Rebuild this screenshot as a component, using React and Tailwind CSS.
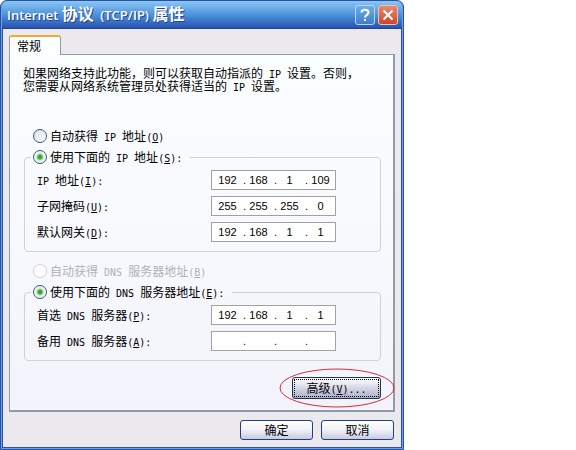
import React, { useState } from "react";

// Chinese glyphs are 12px wide, latin ones half of that
const Mixed = ({ children }) =>
    children.split(/([\x20-\x7e]+)/).map((part, i) =>
        /^[\x20-\x7e]+$/.test(part) ? (
            <span key={i} className="font-['DejaVu_Sans_Mono',monospace] text-[10px] leading-0 whitespace-pre">{part}</span>
        ) : (
            part
        )
    );

const Caption = ({ text, hotkey, end = "" }) => (
    <span className="whitespace-nowrap">
        <Mixed>{text + "("}</Mixed>
        <span className="font-['DejaVu_Sans_Mono',monospace] text-[10px] leading-0 underline underline-offset-1">{hotkey}</span>
        <Mixed>{")" + end}</Mixed>
    </span>
);

const Radio = ({ name, value, selected, onSelect, disabled, ...caption }) => (
    <label className={`flex w-fit items-center gap-[3px] leading-[14px] ${disabled ? "text-[#b0b1b8]" : ""}`}>
        <input
            type="radio"
            name={name}
            checked={selected === value}
            onChange={() => onSelect(value)}
            disabled={disabled}
            className={`h-3.5 w-3.5 shrink-0 appearance-none rounded-full border border-[#35587f] disabled:border-[#cfd0d6] disabled:from-white ${
                selected === value
                    ? "bg-[radial-gradient(circle,#23951f_0,#4bb445_2px,#eef5ee_4px)]"
                    : "bg-linear-to-br from-[#dcdfe2] to-white"
            }`}
        />
        <Caption {...caption} />
    </label>
);

const IpField = ({ id, octets }) => {
    const [parts, setParts] = useState(octets);

    const change = (index, text) => {
        setParts(parts.map((p, i) => (i === index ? text : p)));
    };

    return (
        <div className="flex h-5 w-[125px] items-center border border-[#a0a1a8] bg-white pl-[3px] font-['Liberation_Sans',sans-serif] text-[11px]">
            {parts.map((part, i) => (
                <React.Fragment key={i}>
                    {i > 0 && <span className="w-1.5 text-right">.</span>}
                    <input
                        id={i === 0 ? id : undefined}
                        aria-label={i === 0 ? undefined : `${id} ${i + 1}`}
                        value={part}
                        maxLength={3}
                        onChange={(e) => change(i, e.target.value)}
                        className="w-[25px] text-center outline-none"
                    />
                </React.Fragment>
            ))}
        </div>
    );
};

const FieldRow = ({ id, octets, ...caption }) => (
    <div className="flex items-center">
        <label htmlFor={id} className="w-[174px] shrink-0">
            <Caption {...caption} end=":" />
        </label>
        <IpField id={id} octets={octets} />
    </div>
);

const Group = ({ legend, children }) => (
    <fieldset className="rounded-[4px] border border-[#d0d1d8] px-3 pb-[9px]">
        <legend className="-ml-1.5 pr-2 pl-0.5">{legend}</legend>
        <div className="flex flex-col gap-1.5 pt-1.5">{children}</div>
    </fieldset>
);

const DialogButton = ({ children }) => (
    <button className="h-5 w-[73px] rounded-[3px] border border-[#1f427c] bg-linear-to-b from-white via-[#f0f1f8] to-[#c9cadd]">
        {children}
    </button>
);

const App = () => {
    const [ipMode, setIpMode] = useState("manual");
    const [dnsMode, setDnsMode] = useState("manual");

    return (
        <main className="min-h-screen bg-white font-['Noto_Sans_CJK_SC',sans-serif] text-[12px] leading-3 text-black">
            <div className="w-full max-w-[404px] rounded-t-[7px] border border-[#2650a0] bg-[#6c9fe4] px-px pb-px">
                <header className="flex h-7 items-center rounded-t-[6px] border-b border-[#1f469c] bg-linear-to-b from-[#8cc6f3] via-[#4d94dd] to-[#2a52b0] pr-1 pl-[5px]">
                    <h1 className="flex-1 font-['Open_Sans','Noto_Sans_CJK_SC',sans-serif] text-[13px] font-semibold leading-4 text-white [text-shadow:1px_1px_0_#23458f]">
                        Internet <span className="mr-[3px] text-[16px] font-bold">协议</span> (TCP/IP) <span className="text-[16px] font-bold">属性</span>
                    </h1>
                    <div className="flex gap-[3px]">
                        <button aria-label="帮助" className="grid h-5 w-5 place-items-center rounded-[3px] border border-[#b9d6f6] bg-linear-to-b from-[#6eaee9] to-[#3e7dcc]">
                            <svg viewBox="0 0 18 18" className="h-[18px] w-[18px]" fill="none" stroke="white" strokeWidth="2">
                                <path d="M5.5 6.5C5.5 2.8 12.5 2.8 12.5 6.5C12.5 9 9 8.8 9 11.5M9 13v2" />
                            </svg>
                        </button>
                        <button aria-label="关闭" className="grid h-5 w-5 place-items-center rounded-[3px] border border-[#efc0b8] bg-linear-to-b from-[#e58a72] to-[#cc4527]">
                            <svg viewBox="0 0 18 18" className="h-[18px] w-[18px]" fill="none" stroke="white" strokeWidth="2">
                                <path d="M4.5 4.5l9 9M13.5 4.5l-9 9" />
                            </svg>
                        </button>
                    </div>
                </header>

                <div className="border-x border-b border-[#2a52a8] bg-[#ebe8ee] px-1.5 pt-1.5 pb-[7px]">
                    <div role="tablist" className="flex">
                        <button role="tab" aria-selected="true" className="relative z-10 -mb-px h-5 w-[52px] rounded-t-[3px] border-x border-t-2 border-x-[#8f9bab] border-t-[#f0ab35] bg-[#fcfeff] pr-3">
                            常规
                        </button>
                    </div>

                    <section className="border border-r-2 border-b-2 border-[#8f9bab] bg-linear-to-b from-[#fbfeff] to-[#f3f4fb] pt-[11px] pr-3 pb-[11px] pl-3.5">
                        <p className="-ml-px leading-[13px]">
                            <Mixed>如果网络支持此功能，则可以获取自动指派的 IP 设置。否则，</Mixed>
                            <br />
                            <Mixed>您需要从网络系统管理员处获得适当的 IP 设置。</Mixed>
                        </p>

                        <div className="mt-[37px] flex flex-col gap-[7px]">
                            <div className="pl-[9px]">
                                <Radio name="ip" value="auto" selected={ipMode} onSelect={setIpMode} text="自动获得 IP 地址" hotkey="O" />
                            </div>
                            <Group legend={<Radio name="ip" value="manual" selected={ipMode} onSelect={setIpMode} text="使用下面的 IP 地址" hotkey="S" end=":" />}>
                                <FieldRow id="ip" text="IP 地址" hotkey="I" octets={["192", "168", "1", "109"]} />
                                <FieldRow id="mask" text="子网掩码" hotkey="U" octets={["255", "255", "255", "0"]} />
                                <FieldRow id="gateway" text="默认网关" hotkey="D" octets={["192", "168", "1", "1"]} />
                            </Group>
                        </div>

                        <div className="mt-3 flex flex-col gap-[7px]">
                            <div className="pl-[9px]">
                                <Radio name="dns" value="auto" selected={dnsMode} onSelect={setDnsMode} disabled text="自动获得 DNS 服务器地址" hotkey="B" />
                            </div>
                            <Group legend={<Radio name="dns" value="manual" selected={dnsMode} onSelect={setDnsMode} text="使用下面的 DNS 服务器地址" hotkey="E" end=":" />}>
                                <FieldRow id="dns1" text="首选 DNS 服务器" hotkey="P" octets={["192", "168", "1", "1"]} />
                                <FieldRow id="dns2" text="备用 DNS 服务器" hotkey="A" octets={["", "", "", ""]} />
                            </Group>
                        </div>

                        <div className="mt-4 flex justify-end">
                            <div className="relative">
                                <button className="h-[22px] w-[89px] rounded-[3px] border border-[#1f3058] bg-linear-to-b from-white to-[#aeb0cc] p-px">
                                    <span className="flex h-full items-center justify-center border border-dotted border-black">
                                        <Caption text="高级" hotkey="V" end="..." />
                                    </span>
                                </button>
                                <svg viewBox="0 0 116 40" className="pointer-events-none absolute -top-[9px] -left-[13px] h-10 w-[116px] max-w-none" fill="none" stroke="#d8283c">
                                    <ellipse cx="58" cy="20" rx="57" ry="19" />
                                </svg>
                            </div>
                        </div>
                    </section>

                    <div className="mt-2 flex justify-end gap-2 pr-px">
                        <DialogButton>确定</DialogButton>
                        <DialogButton>取消</DialogButton>
                    </div>
                </div>
            </div>
        </main>
    );
};

export default App;
